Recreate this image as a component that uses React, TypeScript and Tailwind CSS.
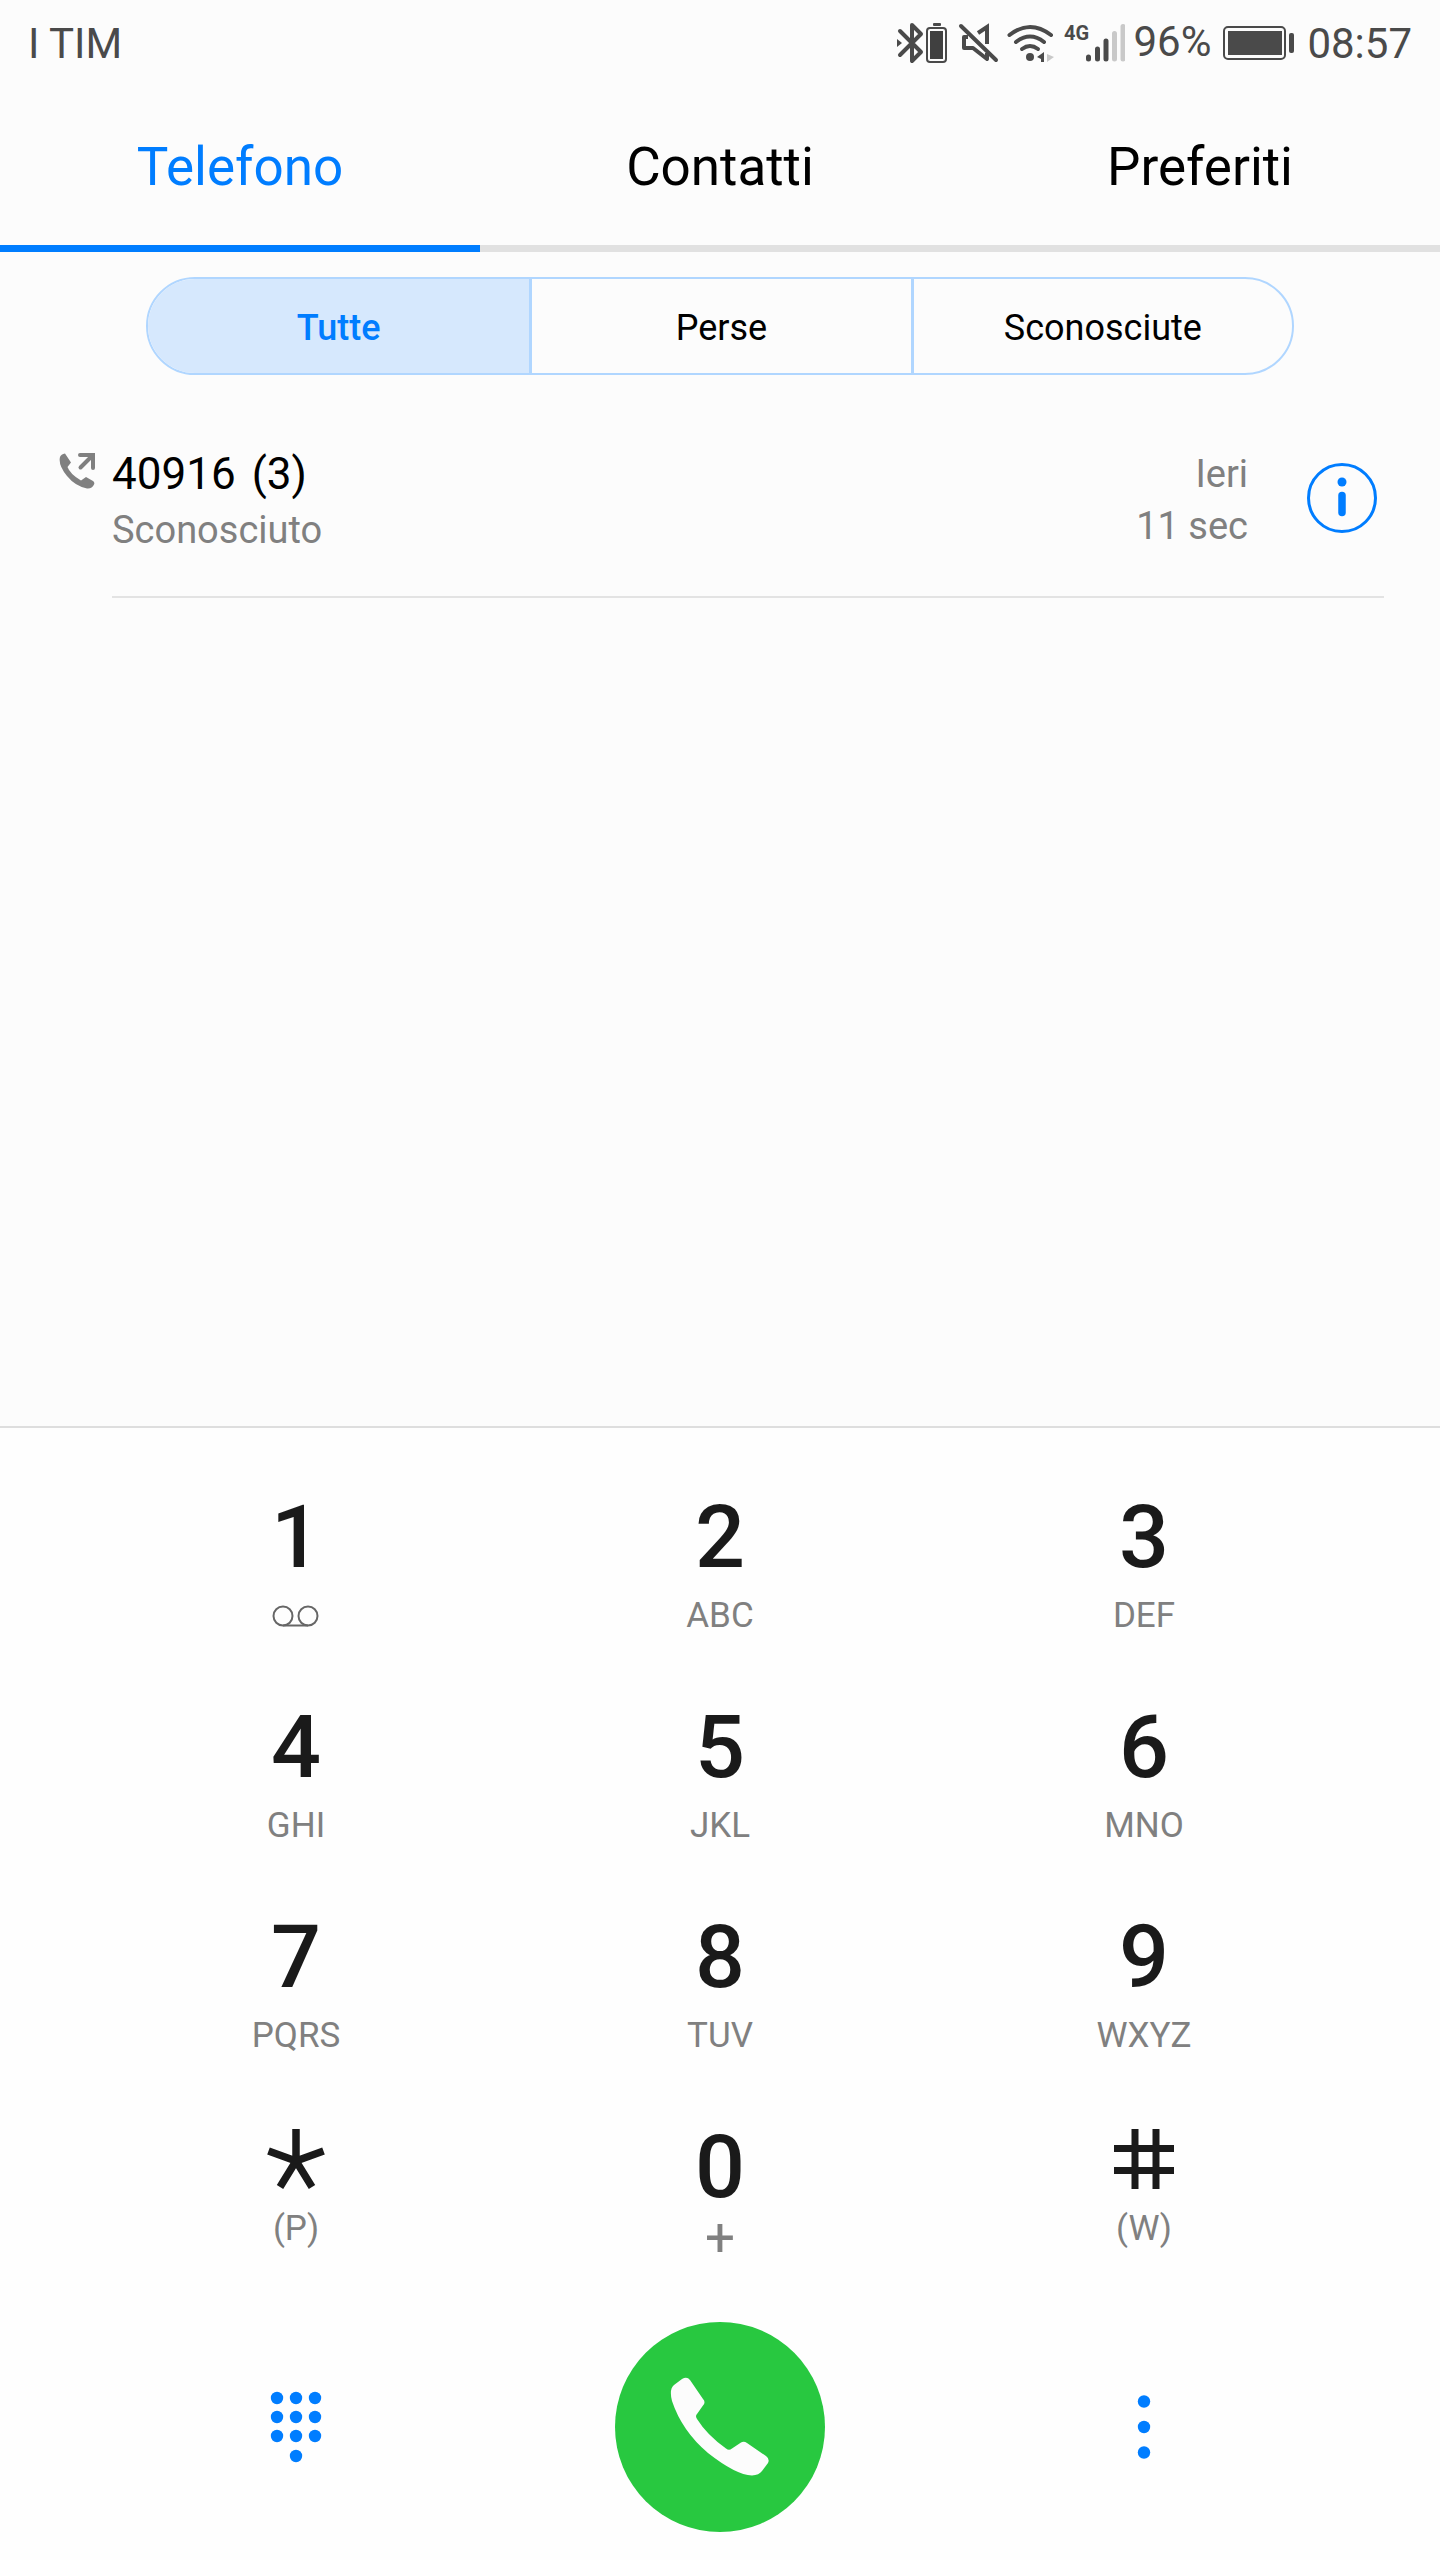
import { FC, useState } from "react";

const tabs = ["Telefono", "Contatti", "Preferiti"];

const filters = ["Tutte", "Perse", "Sconosciute"];

const keys = [
  { digit: "1", letters: "" },
  { digit: "2", letters: "ABC" },
  { digit: "3", letters: "DEF" },
  { digit: "4", letters: "GHI" },
  { digit: "5", letters: "JKL" },
  { digit: "6", letters: "MNO" },
  { digit: "7", letters: "PQRS" },
  { digit: "8", letters: "TUV" },
  { digit: "9", letters: "WXYZ" },
  { digit: "*", letters: "(P)" },
  { digit: "0", letters: "+" },
  { digit: "#", letters: "(W)" },
];

const StatusIcons: FC = () => (
  <svg width="230" height="44" viewBox="895 21 230 44" fill="none" aria-hidden="true">
    {/* bluetooth */}
    <g stroke="#4a4a4a" strokeWidth="4" strokeLinecap="round" strokeLinejoin="round">
      <path d="M900 30 L921 51 L912 60 V24 L921 33 L900 54" />
    </g>
    <path d="M897 38 L902 42 L897 46Z" fill="#4a4a4a" />
    {/* headset battery */}
    <rect x="933" y="22" width="8" height="3" rx="1" fill="#4a4a4a" />
    <rect x="927" y="27" width="19" height="34" rx="3" stroke="#4a4a4a" strokeWidth="2" />
    <rect x="930" y="30" width="13" height="28" fill="#404040" />
    {/* muted speaker */}
    <g stroke="#4a4a4a" strokeWidth="4">
      <path d="M961 25 L996 59" strokeLinecap="round" />
      <path d="M968 36 H964 V47 H973 L987 58 V52" strokeLinejoin="round" />
      <path d="M978 32 L987 26 V43" />
    </g>
    {/* wifi */}
    <g stroke="#4a4a4a" strokeWidth="4" strokeLinecap="round">
      <path d="M1009.500 34 Q1030 18 1051 34" />
      <path d="M1016 41 Q1030 30 1044 41" />
      <path d="M1022 48 Q1030 42 1038 48" />
    </g>
    <circle cx="1030" cy="56" r="4" fill="#4a4a4a" />
    <path d="M1044 51 V61 H1041 V58 L1037 56Z" fill="#4a4a4a" />
    <path d="M1047 53 L1054 56 L1047 61Z" fill="#c9c9c9" />
    {/* signal bars */}
    <g strokeWidth="5" strokeLinecap="round">
      <path d="M1088.500 56 V58 M1097.500 48 V58 M1106 40 V58" stroke="#4a4a4a" />
      <path d="M1114.500 32.500 V58 M1123 25.500 V58" stroke="#c9c9c9" />
    </g>
    <text x="1064" y="39" fill="#4a4a4a" fontSize="20" fontWeight="700" fontFamily="Roboto, sans-serif">
      4G
    </text>
  </svg>
);

const BatteryIcon: FC = () => (
  <svg width="72" height="36" viewBox="0 0 72 36" fill="none" aria-hidden="true">
    <rect x="1" y="1" width="61" height="32" rx="4" stroke="#4a4a4a" strokeWidth="2" />
    <rect x="5" y="5" width="54" height="24" fill="#4a4a4a" />
    <rect x="66" y="7" width="5" height="20" rx="2" fill="#4a4a4a" />
  </svg>
);

const OutgoingIcon: FC = () => (
  <svg width="36" height="36" viewBox="0 0 36 36" fill="none" aria-label="Chiamata in uscita">
    <path
      d="M1 4 Q2 1 6 0.500 L12 9.500 L8.500 14 Q11 21 22 27.500 L27 24 L34 28 Q36 29.500 35 31.500 Q33 36 28 35.500 Q16 33 8 23 Q-1 12 1 4Z"
      fill="#808080"
    />
    <path d="M21 2 H34 V15" stroke="#808080" strokeWidth="4" strokeLinecap="round" />
    <path d="M21.500 14.500 L33 3" stroke="#808080" strokeWidth="4" strokeLinecap="round" />
  </svg>
);

const InfoIcon: FC = () => (
  <svg width="70" height="70" viewBox="0 0 70 70" fill="none" aria-hidden="true">
    <circle cx="35" cy="35" r="33.500" stroke="#007dff" strokeWidth="3" />
    <circle cx="35" cy="19" r="4.500" fill="#007dff" />
    <path d="M35 32.500 V49.500" stroke="#007dff" strokeWidth="7.500" strokeLinecap="round" />
  </svg>
);

const VoicemailIcon: FC = () => (
  <svg width="48" height="22" viewBox="0 0 48 22" fill="none" stroke="#666666" strokeWidth="2" aria-hidden="true">
    <ellipse cx="11" cy="11" rx="9.500" ry="9.500" />
    <ellipse cx="36" cy="11" rx="9.500" ry="9.500" />
    <path d="M11 20.500 H36" />
  </svg>
);

const StarIcon: FC = () => (
  <svg width="60" height="60" viewBox="0 0 60 60" stroke="#1a1a1a" strokeWidth="7.500" aria-hidden="true">
    <path d="M30 0 V32 M30 32 L2.500 22 M30 32 L57.500 22 M30 32 L14 58 M30 32 L46 58" />
  </svg>
);

const HashIcon: FC = () => (
  <svg width="60" height="60" viewBox="0 0 60 60" stroke="#1a1a1a" strokeWidth="7" aria-hidden="true">
    <path d="M21 0 V60 M42 0 V60 M0 19.500 H60 M0 41.500 H60" />
  </svg>
);

const KeypadIcon: FC = () => (
  <svg width="52" height="72" viewBox="0 0 52 72" fill="#007dff" aria-hidden="true">
    {[7, 26, 45].map((y) =>
      [7, 26, 45].map((x) => <circle key={`${x}-${y}`} cx={x} cy={y} r="6.200" />)
    )}
    <circle cx="26" cy="65" r="6.200" />
  </svg>
);

const MoreIcon: FC = () => (
  <svg width="14" height="66" viewBox="0 0 14 66" fill="#007dff" aria-hidden="true">
    <circle cx="7" cy="7.500" r="6.200" />
    <circle cx="7" cy="33" r="6.200" />
    <circle cx="7" cy="58.500" r="6.200" />
  </svg>
);

const HandsetIcon: FC = () => (
  <svg width="100" height="100" viewBox="0 0 100 100" fill="#fcfcfc" aria-hidden="true">
    <path d="M4 8 L12 2 Q17 -1 20 3 L33 22 Q36 25 33 28.500 L27 37 Q25 39 27 42 Q37 58 56 71.500 Q59 74 62 71.500 L71 65.500 Q74 64 77 66 L96 79 Q100 82 98 86 L92 94 Q89 98 82 98.500 Q66 98 38 76 Q12 54 2 24 Q-1 12 4 8Z" />
  </svg>
);

const App: FC = () => {
  const [tab, setTab] = useState("Telefono");
  const [filter, setFilter] = useState("Tutte");
  const [number, setNumber] = useState("");

  const press = (digit: string) => setNumber(number + digit);

  return (
    <div className="flex min-h-screen flex-col bg-[#fcfcfc] font-[Roboto,sans-serif] text-black">
      {/* status bar */}
      <header className="flex h-22 items-center justify-between px-7 text-[42px] leading-[48px] text-[#4a4a4a]">
        <span>I TIM</span>
        <div className="flex items-center">
          <StatusIcons />
          <span className="ml-2 pb-1">96%</span>
          <div className="mx-3">
            <BatteryIcon />
          </div>
          <span>08:57</span>
        </div>
      </header>

      {/* main tabs */}
      <nav className="grid grid-cols-3">
        {tabs.map((name) => (
          <button
            key={name}
            onClick={() => setTab(name)}
            className={`h-[164px] border-b-7 pt-0.5 text-[53px] ${
              tab === name ? "border-[#007dff] text-[#007dff]" : "border-[#e1e1e1]"
            }`}
          >
            {name}
          </button>
        ))}
      </nav>

      <main className="flex-1">
        {/* call filter */}
        <div className="mx-[146px] mt-[25px] grid h-[98px] grid-cols-3 overflow-hidden rounded-full border-2 border-[#b0d6ff] text-[36px]">
          {filters.map((name) => (
            <button
              key={name}
              onClick={() => setFilter(name)}
              className={`border-[#b0d6ff] pt-1 not-first:border-l-3 ${
                filter === name ? "bg-[#d6e8fd] font-medium text-[#007dff]" : ""
              }`}
            >
              {name}
            </button>
          ))}
        </div>

        {/* call log */}
        <ul>
          <li className="flex pr-14 pl-[59px]">
            <div className="w-[53px] shrink-0 pt-[78px]">
              <OutgoingIcon />
            </div>
            <div className="flex h-[223px] flex-1 items-start border-b-2 border-[#e3e3e3] pt-[71px]">
              <div className="flex-1 leading-[56px]">
                <p className="flex gap-4 text-[44px]">
                  <span>40916</span>
                  <span>(3)</span>
                </p>
                <p className="text-[38px] text-[#808080]">Sconosciuto</p>
              </div>
              <div className="mt-[2px] mr-[59px] text-right text-[38px] leading-[52px] text-[#808080]">
                <p>Ieri</p>
                <p>11 sec</p>
              </div>
              <button aria-label="Dettagli" className="mt-[17px] mr-[7px]">
                <InfoIcon />
              </button>
            </div>
          </li>
        </ul>
      </main>

      {/* dial pad */}
      <section className="border-t-2 border-[#dedede] bg-[#fefefe] px-[84px] pt-[50px] pb-7">
        <div className="grid grid-cols-3">
          {keys.map(({ digit, letters }) => {
            const symbol = digit === "*" || digit === "#";
            return (
              <button
                key={digit}
                aria-label={digit}
                onClick={() => press(digit)}
                className="flex h-[210px] flex-col items-center text-[#1a1a1a]"
              >
                {symbol ? (
                  <span className="flex h-[101px] items-center">
                    {digit === "*" ? <StarIcon /> : <HashIcon />}
                  </span>
                ) : (
                  <span className="text-[88px] leading-[118px] font-medium">{digit}</span>
                )}
                {digit === "1" && (
                  <span className="flex h-10 items-center">
                    <VoicemailIcon />
                  </span>
                )}
                {digit === "0" && (
                  <span className="text-[53px] leading-[24px] text-[#808080]">{letters}</span>
                )}
                {digit !== "1" && digit !== "0" && (
                  <span className="text-[35px] leading-10 text-[#808080]">{letters}</span>
                )}
              </button>
            );
          })}
        </div>

        <div className="grid grid-cols-3 place-items-center pt-1">
          <button aria-label="Tastiera">
            <KeypadIcon />
          </button>
          <button
            aria-label="Chiama"
            className="flex size-[210px] items-center justify-center rounded-full bg-[#28c840]"
          >
            <HandsetIcon />
          </button>
          <button aria-label="Altro">
            <MoreIcon />
          </button>
        </div>
      </section>
    </div>
  );
};

export default App;
